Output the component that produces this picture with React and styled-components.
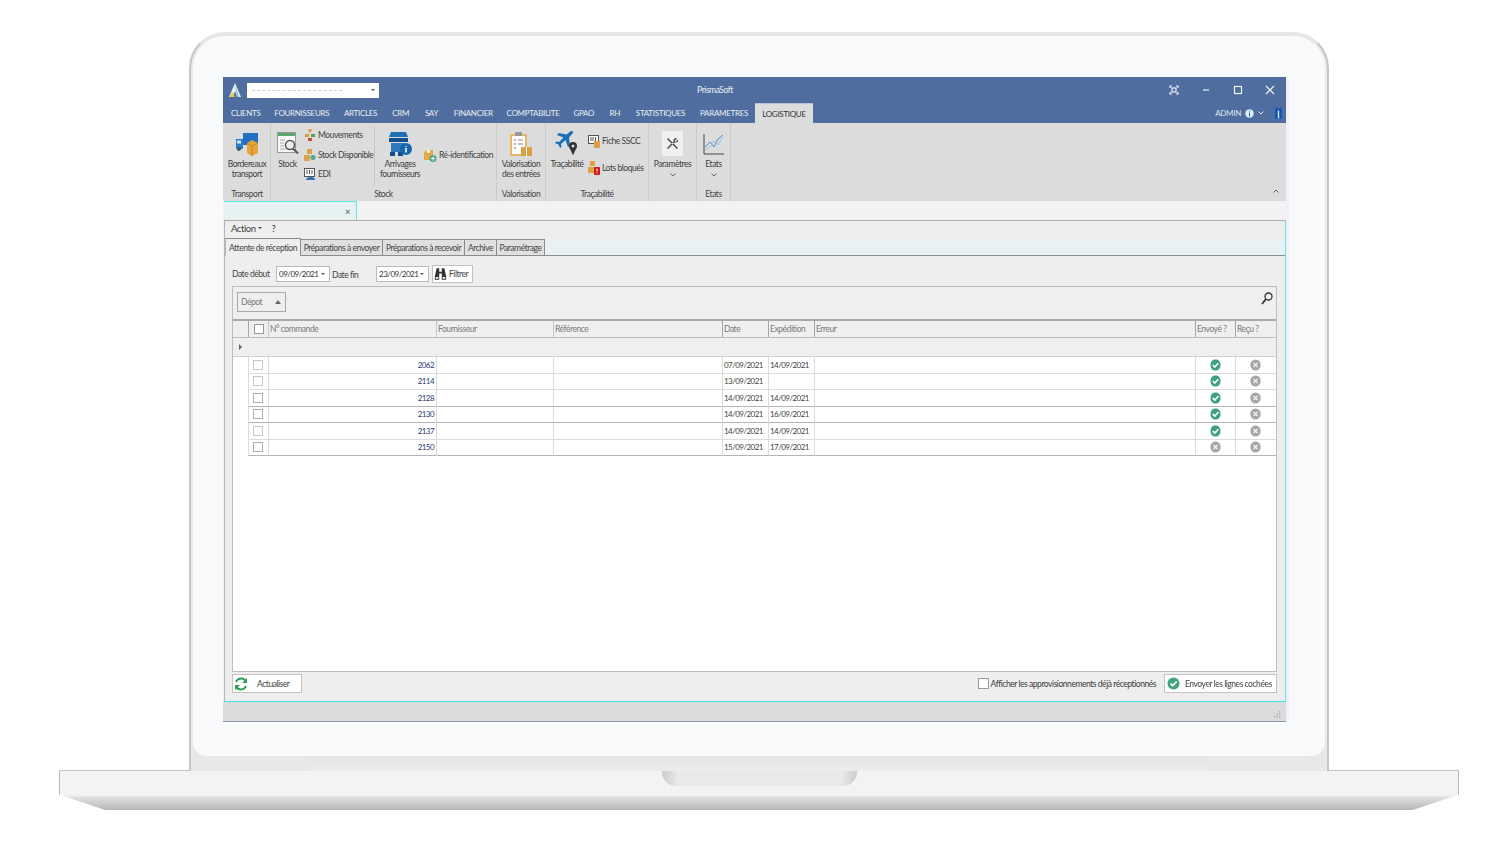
import React from "react";
import styled, { createGlobalStyle } from "styled-components";

const COLS = "15px 20px 168px 117px 169px 46px 46px 381px 40px 41px";

const NAV = [
  ["CLIENTS", 43.5],
  ["FOURNISSEURS", 68.5],
  ["ARTICLES", 49],
  ["CRM", 31.5],
  ["SAY", 30],
  ["FINANCIER", 53.5],
  ["COMPTABILITE", 66],
  ["GPAO", 35.5],
  ["RH", 26.5],
  ["STATISTIQUES", 65],
  ["PARAMETRES", 62],
];

const ROWS = [
  { id: "2062", date: "07/09/2021", exp: "14/09/2021", sent: true },
  { id: "2114", date: "13/09/2021", exp: "", sent: true },
  { id: "2128", date: "14/09/2021", exp: "14/09/2021", sent: true, dark: true },
  { id: "2130", date: "14/09/2021", exp: "16/09/2021", sent: true, dark: true },
  { id: "2137", date: "14/09/2021", exp: "14/09/2021", sent: true },
  { id: "2150", date: "15/09/2021", exp: "17/09/2021", sent: false, dark: true },
];

const HEADERS = ["N° commande", "Fournisseur", "Référence", "Date", "Expédition", "Erreur", "Envoyé ?", "Reçu ?"];

const TABS = ["Attente de réception", "Préparations à envoyer", "Préparations à recevoir", "Archive", "Paramétrage"];
const TAB_W = [76, 83, 83, 33, 49];

const Global = createGlobalStyle`
  html, body { margin: 0; padding: 0; background: #fff; }
  body { font-family: Lato, "Liberation Sans", Arial, sans-serif; }
  * { box-sizing: border-box; }
  svg { flex: none; }
`;

const Page = styled.div`
  width: 1500px;
  height: 842px;
  overflow: hidden;
  padding-top: 32px;
  display: flex;
  flex-direction: column;
  align-items: center;
`;

const Lid = styled.div`
  position: relative;
  z-index: 1;
  width: 1140px;
  height: 739px;
  margin: 0 0 -1px 18px;
  background: #e6e8ea;
  border: 2px solid #e4e6e8;
  border-left-color: #c4c6c8;
  border-right-color: #c4c6c8;
  border-bottom: 0;
  border-radius: 36px 36px 0 0;
  display: flex;
  flex-direction: column;
`;

const Bezel = styled.div`
  height: 720px;
  margin: 2px 2px 0;
  background: #f8fafb;
  border-radius: 32px 32px 14px 14px;
  padding: 41px 0 0 30px;
`;

const Hinge = styled.div`
  height: 15px;
  margin: 0 120px;
  background: linear-gradient(#e3e4e6, #ebedef);
`;

const Base = styled.div`
  position: relative;
  width: 1400px;
  height: 40px;
  margin-left: 18px;
  background: linear-gradient(#f2f3f5 0, #f1f3f5 62%, #dfe0e2 68%, #b4b5b7 100%);
  clip-path: polygon(0 0, 100% 0, 100% 61%, 96.7% 100%, 3.3% 100%, 0 61%);
  border-top: 1px solid #c4c4c4;
  border-left: 1px solid #b8b8b8;
  border-right: 1px solid #b8b8b8;
`;

const Notch = styled.div`
  position: absolute;
  left: 602px;
  top: 0;
  width: 195px;
  height: 15px;
  border-radius: 0 0 14px 14px;
  background: linear-gradient(90deg, #c9cbcc, #e8eaeb 8%, #e8eaeb 92%, #c9cbcc);
`;

const Screen = styled.div`
  width: 1063px;
  height: 645px;
  background: #f0f0f0;
  box-shadow: 3px 0 0 #f3eff8;
  border-bottom: 1px solid #8f97ab;
  display: flex;
  flex-direction: column;
  font-size: 8.5px;
  letter-spacing: -0.45px;
  white-space: nowrap;
  color: #3c3c3c;
  filter: blur(0.35px);
`;

const TitleBar = styled.div`
  height: 26px;
  background: #4f6d9e;
  display: flex;
  align-items: center;
  padding: 0 10px 0 6px;
  color: #eef2f8;
`;

const AppLogo = styled.svg`
  width: 12px;
  height: 14px;
  margin-right: 6px;
`;

const Combo = styled.div`
  width: 132px;
  height: 15px;
  background: #fff;
  display: flex;
  align-items: center;
  justify-content: space-between;
  padding: 0 4px 0 5px;
`;

const Redacted = styled.span`
  width: 90px;
  border-top: 1px dashed #d0d0d0;
`;

const Caret = styled.span`
  width: 0;
  height: 0;
  border-left: 2px solid transparent;
  border-right: 2px solid transparent;
  border-top: 2px solid ${(p) => p.$color || "#555"};
`;

const AppTitle = styled.div`
  width: 60px;
  margin-left: 306px;
  text-align: center;
`;

const WinButtons = styled.div`
  margin-left: auto;
  display: flex;
  align-items: center;
  gap: 20px;
`;

const WinIcon = styled.svg`
  width: 12px;
  height: 12px;
  fill: none;
  stroke: #eef2f8;
  stroke-width: 1.2;
`;

const NavBar = styled.div`
  height: 20px;
  background: #4f6d9e;
  display: flex;
  align-items: flex-end;
  padding-left: 1px;
`;

const NavItem = styled.div`
  width: ${(p) => p.$w}px;
  height: 20px;
  display: flex;
  align-items: center;
  justify-content: center;
  color: #e8edf5;
  font-size: 8px;
  letter-spacing: -0.3px;
  flex: none;
`;

const NavActive = styled(NavItem)`
  background: #dcdcdc;
  border-top: 1px solid #b9c3d4;
  color: #333;
`;

const UserBox = styled.div`
  margin-left: auto;
  height: 20px;
  display: flex;
  align-items: center;
  gap: 3px;
  padding-right: 3px;
  color: #dfe6f0;
  font-size: 8px;
  letter-spacing: -0.3px;
`;

const Ribbon = styled.div`
  position: relative;
  height: 78px;
  background: #dcdcdc;
  display: flex;
  padding-left: 1px;
`;

const Group = styled.div`
  width: ${(p) => p.$w}px;
  flex: none;
  display: flex;
  flex-direction: column;
  border-right: 1px solid #cacaca;
`;

const GroupBody = styled.div`
  height: 65px;
  display: flex;
  padding-top: 8px;
`;

const GroupLabel = styled.div`
  height: 13px;
  text-align: center;
  line-height: 12px;
  color: #444;
`;

const BigButton = styled.div`
  width: ${(p) => p.$w}px;
  flex: none;
  margin-left: ${(p) => p.$ml || 0}px;
  display: flex;
  flex-direction: column;
  align-items: center;
  text-align: center;
  white-space: normal;
  line-height: 9.5px;
  color: #3f3f3f;
`;

const BigIcon = styled.div`
  height: 25px;
  margin-bottom: 4px;
  display: flex;
  align-items: center;
  justify-content: center;
  ${(p) => p.$boxed && "width: 21px; background: #f0f0f0;"}
`;

const SmallColumn = styled.div`
  width: ${(p) => p.$w}px;
  flex: none;
  margin: ${(p) => p.$mt || 0}px 0 0 ${(p) => p.$ml || 0}px;
  height: ${(p) => p.$h || 54}px;
  display: flex;
  flex-direction: column;
  justify-content: ${(p) => p.$justify || "space-between"};
  gap: ${(p) => p.$gap || 0}px;
  padding-top: ${(p) => p.$pt || 0}px;
`;

const SmallButton = styled.div`
  display: flex;
  align-items: center;
  gap: 2px;
  height: 12px;
  color: #3f3f3f;
`;

const InnerSep = styled.div`
  width: 1px;
  height: 58px;
  flex: none;
  margin: -4px 0 0 ${(p) => p.$ml}px;
  background: #c6c6c6;
`;

const Chevron = styled.svg`
  width: 6px;
  height: 4px;
  margin-top: 3px;
  fill: none;
  stroke: #666;
  stroke-width: 1;
`;

const Collapse = styled(Chevron)`
  position: absolute;
  right: 7px;
  bottom: 8px;
  margin: 0;
`;

const DocStrip = styled.div`
  height: 19px;
  background: #f2f2f2;
  padding-left: 1px;
`;

const DocTab = styled.div`
  width: 133px;
  height: 19px;
  background: #e6f1f1;
  border-top: 1px solid #5fe6ea;
  border-right: 1px solid #5fe6ea;
  display: flex;
  align-items: center;
  justify-content: flex-end;
  padding-right: 6px;
  color: #555;
  font-size: 10px;
`;

const Panel = styled.div`
  height: 482px;
  margin-left: 1px;
  background: #eeeeee;
  border-top: 1px solid #aaa;
  border-left: 1px solid #b5b5b5;
  border-right: 1px solid #5fe6ea;
  border-bottom: 1px solid #40e4e4;
  display: flex;
  flex-direction: column;
`;

const ActionBar = styled.div`
  height: 18px;
  display: flex;
  align-items: center;
  gap: 10px;
  padding: 0 0 4px 6px;
  font-size: 9.5px;
  color: #444;
`;

const ActionItem = styled.span`
  display: flex;
  align-items: center;
  gap: 2px;
`;

const TabStrip = styled.div`
  height: 17px;
  background: #e8f2f2;
  border-bottom: 1px solid #8c8c8c;
  display: flex;
  align-items: flex-end;
`;

const Tab = styled.div`
  width: ${(p) => p.$w}px;
  flex: none;
  height: ${(p) => (p.$active ? 18 : 16)}px;
  margin-bottom: ${(p) => (p.$active ? -1 : 0)}px;
  background: ${(p) => (p.$active ? "#eeeeee" : "#e0e0e0")};
  border: 1px solid #8c8c8c;
  border-left-color: ${(p) => (p.$active ? "#b5b5b5" : "#8c8c8c")};
  border-bottom: 0;
  margin-right: -1px;
  display: flex;
  align-items: center;
  justify-content: center;
  color: #444;
`;

const Content = styled.div`
  flex: 1;
  display: flex;
  flex-direction: column;
  padding: 9px 8px 0 7px;
`;

const FilterRow = styled.div`
  height: 18px;
  display: flex;
  align-items: center;
`;

const FilterLabel = styled.span`
  width: ${(p) => p.$w}px;
  padding-top: ${(p) => p.$down || 0}px;
  padding-left: ${(p) => p.$pl || 0}px;
  color: #444;
`;

const DateInput = styled.div`
  width: ${(p) => p.$w}px;
  height: 16px;
  background: #fff;
  border: 1px solid #bbb;
  display: flex;
  align-items: center;
  justify-content: space-between;
  padding: 0 4px 0 2px;
  color: #333;
  font-size: 8px;
  letter-spacing: -0.5px;
`;

const ToolButton = styled.div`
  width: ${(p) => p.$w}px;
  height: ${(p) => p.$h || 18}px;
  margin-left: ${(p) => p.$ml || 0}px;
  background: #fff;
  border: 1px solid #c2c2c2;
  display: flex;
  align-items: center;
  gap: ${(p) => p.$gap || 2}px;
  padding-left: ${(p) => p.$pl || 1}px;
  color: #444;
`;

const GridBox = styled.div`
  height: 386px;
  margin-top: 3px;
  background: #fff;
  border: 1px solid #bdbdbd;
  display: flex;
  flex-direction: column;
`;

const GroupPanel = styled.div`
  height: 34px;
  background: #efefef;
  border-bottom: 2px solid #a8a8a8;
  display: flex;
  align-items: center;
  justify-content: space-between;
  padding: 0 3px 2px 4px;
`;

const SearchSlot = styled.div`
  height: 12px;
  align-self: flex-start;
  margin-top: 5px;
`;

const GroupChip = styled.div`
  width: 49px;
  height: 20px;
  border: 1px solid #a9a9a9;
  display: flex;
  align-items: center;
  justify-content: space-between;
  padding: 0 4px 0 3px;
  color: #777;
`;

const SortArrow = styled.span`
  width: 0;
  height: 0;
  border-left: 3px solid transparent;
  border-right: 3px solid transparent;
  border-bottom: 4px solid #666;
`;

const HeaderRow = styled.div`
  display: grid;
  grid-template-columns: ${COLS};
  height: 17px;
  background: #efefef;
  border-bottom: 1px solid #bdbdbd;
`;

const HeaderCell = styled.div`
  display: flex;
  align-items: center;
  padding-left: 1px;
  color: #7a7a7a;
  border-left: 1px solid ${(p) => (p.$strong ? "#a5a5a5" : "#c8c8c8")};
`;

const FilterStrip = styled.div`
  height: 19px;
  background: #efefef;
  border-bottom: 1px solid #cfcfcf;
  display: flex;
  align-items: center;
  padding-left: 6px;
`;

const RowArrow = styled.span`
  width: 0;
  height: 0;
  border-top: 3px solid transparent;
  border-bottom: 3px solid transparent;
  border-left: 3px solid #666;
`;

const Row = styled.div`
  display: grid;
  grid-template-columns: ${COLS};
  height: 16.5px;
`;

const Cell = styled.div`
  display: flex;
  align-items: center;
  justify-content: ${(p) => p.$align || "flex-start"};
  padding: 0 2px 0 1px;
  color: ${(p) => p.$color || "#444"};
  border-left: 1px solid #dcdcdc;
  border-bottom: 1px solid ${(p) => (p.$dark ? "#b4b4b4" : "#dcdcdc")};
  font-size: 8px;
  letter-spacing: -0.55px;
`;

const Gutter = styled.div``;

const Check = styled.span`
  width: ${(p) => p.$size || 10}px;
  height: ${(p) => p.$size || 10}px;
  flex: none;
  margin-left: ${(p) => p.$ml || 0}px;
  background: #fff;
  border: 1px solid ${(p) => p.$color || "#c4c4c4"};
`;

const Footer = styled.div`
  height: 28px;
  display: flex;
  align-items: flex-start;
  padding-top: 2px;
`;

const FooterOption = styled.div`
  margin-left: auto;
  height: 19px;
  display: flex;
  align-items: center;
  gap: 2px;
`;

const StatusBar = styled.div`
  flex: 1;
  background: #dcdcdc;
  display: flex;
  justify-content: flex-end;
  align-items: flex-end;
  padding: 0 5px 3px 0;
`;

const Grip = styled.svg`
  width: 7px;
  height: 7px;
  fill: #b0b0b0;
`;

const Sent = () => (
  <svg width="11" height="12" viewBox="0 0 11 12">
    <path d="M5.5 .5C8.5.5 10.5 2.5 10.5 6s-2 5.5-5 5.5S.5 9.500.5 6 2.500.500 5.500.5Z" fill="#3fa27a" />
    <path d="M2.800 6l2 2 3.500-3.800" fill="none" stroke="#fff" strokeWidth="1.600" />
  </svg>
);

const Cross = () => (
  <svg width="11" height="12" viewBox="0 0 11 12">
    <ellipse cx="5.500" cy="6" rx="5.200" ry="5.500" fill="#a6a6a6" />
    <path d="M3.500 4l4 4M7.500 4l-4 4" fill="none" stroke="#eee" strokeWidth="1.500" />
  </svg>
);

const TruckIcon = () => (
  <svg width="24" height="24" viewBox="0 0 24 24">
    <rect x="8" y="1" width="15" height="12" fill="#1f6fc4" />
    <path d="M1 7h7v10H1Z" fill="#2a7ccc" />
    <path d="M2 8.500h4v3H2Z" fill="#cfe4f7" />
    <circle cx="4" cy="17" r="2" fill="#456" />
    <path d="M12 11l5-3 6 3v10l-6 3-5-3Z" fill="#e6a53c" />
    <path d="M17 14v10M12 11l5 3 6-3" fill="none" stroke="#bd7f1d" strokeWidth=".8" />
  </svg>
);

const StockIcon = () => (
  <svg width="22" height="25" viewBox="0 0 22 25">
    <rect x=".5" y="1.500" width="18" height="20" fill="#f7f7f7" stroke="#999" />
    <rect x="1" y="2" width="17" height="3" fill="#5aa86c" />
    <circle cx="13" cy="14" r="4.500" fill="#e8eef2" stroke="#555" strokeWidth="1.500" />
    <path d="M16 17.500l5 5" stroke="#555" strokeWidth="2" />
    <path d="M3 9h5M3 12h4M3 15h4M3 18h6" stroke="#aaa" />
  </svg>
);

const BoxesIcon = () => (
  <svg width="12" height="12" viewBox="0 0 12 12">
    <path d="M1 5h4v3H1Z" fill="#d99a3a" />
    <path d="M7 5h4v3H7Z" fill="#57a05b" />
    <path d="M4 9h4v3H4Z" fill="#c94f3c" />
    <path d="M6 0v4M4 2l2-2 2 2" fill="none" stroke="#d99a3a" strokeWidth="1.200" />
  </svg>
);

const StockSmallIcon = () => (
  <svg width="12" height="12" viewBox="0 0 12 12">
    <path d="M3 0h5v5H3Z" fill="#d9a54a" />
    <path d="M0 6h6v6H0Z" fill="#d9a54a" />
    <circle cx="9" cy="8.500" r="2.500" fill="#57a58a" />
  </svg>
);

const EdiIcon = () => (
  <svg width="12" height="12" viewBox="0 0 12 12">
    <rect x=".5" y=".5" width="10" height="8" fill="#fff" stroke="#555" />
    <path d="M3 2v4M5.500 2v4M8 2v4" stroke="#555" />
    <path d="M2 12c0-2 2-3 4-3s5 0 5 3Z" fill="#2f72b8" />
  </svg>
);

const ArrivalIcon = () => (
  <svg width="25" height="26" viewBox="0 0 25 26">
    <path d="M3 1h15l2 5H1Z" fill="#1f6fb5" />
    <rect x="1" y="7" width="19" height="4" fill="#124f8d" />
    <rect x="3" y="12" width="14" height="9" fill="#2f78bd" />
    <rect x="2" y="21" width="5" height="4" fill="#124f8d" />
    <rect x="10" y="21" width="5" height="4" fill="#124f8d" />
    <circle cx="18" cy="18" r="6" fill="#1466ad" />
    <path d="M18 15v.800M18 17v4.500" stroke="#fff" strokeWidth="1.600" />
  </svg>
);

const ReidIcon = () => (
  <svg width="13" height="13" viewBox="0 0 13 13">
    <path d="M0 3l3-2h6v10H0Z" fill="#e3a748" />
    <path d="M3 1v3h3V1" fill="#fff3d8" />
    <circle cx="9" cy="9.500" r="3.500" fill="#4da88a" />
    <path d="M9 7.500v4M7 9.500h4" stroke="#fff" />
  </svg>
);

const ValoIcon = () => (
  <svg width="24" height="26" viewBox="0 0 24 26">
    <rect x="1" y="3" width="17" height="22" rx="1.500" fill="#e8b765" />
    <rect x="3" y="5" width="13" height="18" fill="#fff" />
    <rect x="6" y="1" width="7" height="4" fill="#999" />
    <path d="M5 9h2M5 13h2M5 17h2" stroke="#c9483c" strokeWidth="1.200" />
    <path d="M9 9h5M9 13h5" stroke="#888" />
    <path d="M12 16h11v9H12Z" fill="#d9a048" />
    <path d="M17.500 16v9" stroke="#fff" />
  </svg>
);

const PlaneIcon = () => (
  <svg width="24" height="25" viewBox="0 0 24 25">
    <path d="M16 0c2-.5 2.500 1 1.500 2.500L14 6.500l1 8-2 1.500-2.500-7L6 13l.5 3-1.500 1-1.500-3.500L0 12l1-1.500 3 .5 4.500-4.500L2 4l1.500-2 8 1.500Z" fill="#1b6fb8" />
    <circle cx="18" cy="15" r="4" fill="#333" />
    <circle cx="18" cy="15" r="1.500" fill="#ddd" />
    <path d="M15 17.500l3 7 3-7Z" fill="#333" />
  </svg>
);

const SsccIcon = () => (
  <svg width="12" height="13" viewBox="0 0 12 13">
    <rect x=".5" y=".5" width="10" height="8" fill="#fff" stroke="#555" />
    <path d="M3 2v4M5 2v4M7.500 2v4" stroke="#555" />
    <rect x="6" y="6" width="6" height="7" fill="#d9a048" />
  </svg>
);

const LotsIcon = () => (
  <svg width="12" height="14" viewBox="0 0 12 14">
    <path d="M2 0h5v5H2ZM0 6h6v6H0Z" fill="#dca33f" />
    <rect x="6" y="6" width="6" height="8" rx="1" fill="#d11a1a" />
    <path d="M9 7.500v3M9 11.500v1" stroke="#fff" />
  </svg>
);

const ToolsIcon = () => (
  <svg width="13" height="13" viewBox="0 0 13 13">
    <path d="M2 1l10 10-1 1L1 2ZM12 2.500 9.500 5l-1-1L11 1.500C9 .500 7 2 7.500 4.500L1 11l1 1 6.500-6.500C11 6 12.500 4.500 12 2.500Z" fill="#444" />
  </svg>
);

const ChartIcon = () => (
  <svg width="21" height="22" viewBox="0 0 21 22">
    <path d="M1 1v20h20" fill="none" stroke="#444" />
    <path d="M2 14l5-5 4 5 4-8 5-4" fill="none" stroke="#4a8fd0" />
    <path d="M2 17l5-3 4-6 4 4 5-8" fill="none" stroke="#9ec2e6" />
  </svg>
);

const Binoculars = () => (
  <svg width="13" height="14" viewBox="0 0 15 15">
    <path d="M3 1h3v4h3V1h3l2 9v4H9V7H6v7H1v-4Z" fill="#333" />
    <rect x="2" y="11" width="3" height="2" fill="#fff" />
    <rect x="10" y="11" width="3" height="2" fill="#fff" />
  </svg>
);

const Refresh = () => (
  <svg width="14" height="14" viewBox="0 0 14 14">
    <path d="M12 4.500A5.500 5.500 0 0 0 2 5M2 9.500A5.500 5.500 0 0 0 12 9" fill="none" stroke="#2e9b57" strokeWidth="2" />
    <path d="M13 1v5H8ZM1 13V8h5Z" fill="#2e9b57" />
  </svg>
);

const SendCheck = () => (
  <svg width="13" height="13" viewBox="0 0 13 13">
    <circle cx="6.500" cy="6.500" r="6" fill="#3fa27a" />
    <path d="M3.500 6.500l2.200 2.200 4-4.200" fill="none" stroke="#fff" strokeWidth="1.800" />
  </svg>
);

const Magnifier = () => (
  <svg width="12" height="13" viewBox="0 0 12 13">
    <circle cx="7.500" cy="4.500" r="3.500" fill="none" stroke="#333" strokeWidth="1.300" />
    <path d="M5 7L1 12" stroke="#333" strokeWidth="1.800" />
  </svg>
);

const ChevronDown = () => (
  <Chevron viewBox="0 0 6 4">
    <path d="M.5.500 3 3 5.500.5" />
  </Chevron>
);

function App() {
  return (
    <Page>
      <Global />
      <Lid>
        <Bezel>
          <Screen>
            <TitleBar>
              <AppLogo viewBox="0 0 12 14">
                <path d="M6 0l6 14H8L6 8l-2 6H0Z" fill="#e8edf5" />
                <path d="M3 9l3 5H1Z" fill="#e8c53a" />
                <path d="M6 2l3 9 1 3H8Z" fill="#6fc3d8" />
              </AppLogo>
              <Combo>
                <Redacted />
                <Caret />
              </Combo>
              <AppTitle>PrismaSoft</AppTitle>
              <WinButtons>
                <WinIcon viewBox="0 0 12 12">
                  <path d="M2 4V2h2M8 2h2v2M10 8v2H8M4 10H2V8" />
                  <rect x="4" y="4" width="4" height="4" />
                </WinIcon>
                <WinIcon viewBox="0 0 12 12">
                  <path d="M3 6h6" />
                </WinIcon>
                <WinIcon viewBox="0 0 12 12">
                  <rect x="2.500" y="2.500" width="7" height="7" />
                </WinIcon>
                <WinIcon viewBox="0 0 12 12">
                  <path d="M2 2l8 8M10 2l-8 8" />
                </WinIcon>
              </WinButtons>
            </TitleBar>
            <NavBar>
              {NAV.map(([label, w]) => (
                <NavItem key={label} $w={w}>{label}</NavItem>
              ))}
              <NavActive $w={58}>LOGISTIQUE</NavActive>
              <UserBox>
                ADMIN
                <svg width="11" height="11" viewBox="0 0 11 11">
                  <circle cx="5.500" cy="5.500" r="4.800" fill="#e4ecf7" stroke="#2d62b0" />
                  <path d="M5.500 2.500v1M5.500 4.500v4" stroke="#2d62b0" />
                </svg>
                <svg width="6" height="4" viewBox="0 0 6 4">
                  <path d="M.5.500 3 3 5.500.5" fill="none" stroke="#e8edf5" />
                </svg>
                <svg width="9" height="12" viewBox="0 0 9 12" style={{ marginLeft: 7 }}>
                  <path d="M1 3 2 0l2.500 2L7 0l1 3v9H1Z" fill="#1257b0" />
                  <path d="M4.500 3.500v8" stroke="#dfe8f4" strokeWidth="1.400" />
                </svg>
              </UserBox>
            </NavBar>
            <Ribbon>
              <Group $w={47}>
                <GroupBody>
                  <BigButton $w={46}>
                    <BigIcon><TruckIcon /></BigIcon>
                    Bordereaux transport
                  </BigButton>
                </GroupBody>
                <GroupLabel>Transport</GroupLabel>
              </Group>
              <Group $w={226}>
                <GroupBody>
                  <BigButton $w={33}>
                    <BigIcon><StockIcon /></BigIcon>
                    Stock
                  </BigButton>
                  <SmallColumn $w={67} $mt={-2} $h={51}>
                    <SmallButton><BoxesIcon />Mouvements</SmallButton>
                    <SmallButton><StockSmallIcon />Stock Disponible</SmallButton>
                    <SmallButton><EdiIcon />EDI</SmallButton>
                  </SmallColumn>
                  <InnerSep $ml={3} />
                  <BigButton $w={40} $ml={5}>
                    <BigIcon><ArrivalIcon /></BigIcon>
                    Arrivages fournisseurs
                  </BigButton>
                  <SmallColumn $w={70} $ml={4} $pt={18} $justify="flex-start">
                    <SmallButton><ReidIcon />Ré-identification</SmallButton>
                  </SmallColumn>
                </GroupBody>
                <GroupLabel>Stock</GroupLabel>
              </Group>
              <Group $w={49}>
                <GroupBody>
                  <BigButton $w={48}>
                    <BigIcon><ValoIcon /></BigIcon>
                    Valorisation des entrées
                  </BigButton>
                </GroupBody>
                <GroupLabel>Valorisation</GroupLabel>
              </Group>
              <Group $w={103}>
                <GroupBody>
                  <BigButton $w={42}>
                    <BigIcon><PlaneIcon /></BigIcon>
                    Traçabilité
                  </BigButton>
                  <SmallColumn $w={58} $pt={4} $justify="flex-start" $gap={15}>
                    <SmallButton><SsccIcon />Fiche SSCC</SmallButton>
                    <SmallButton><LotsIcon />Lots bloqués</SmallButton>
                  </SmallColumn>
                </GroupBody>
                <GroupLabel>Traçabilité</GroupLabel>
              </Group>
              <Group $w={48}>
                <GroupBody>
                  <BigButton $w={47}>
                    <BigIcon $boxed><ToolsIcon /></BigIcon>
                    Paramètres
                    <ChevronDown />
                  </BigButton>
                </GroupBody>
                <GroupLabel />
              </Group>
              <Group $w={34}>
                <GroupBody>
                  <BigButton $w={33}>
                    <BigIcon><ChartIcon /></BigIcon>
                    Etats
                    <ChevronDown />
                  </BigButton>
                </GroupBody>
                <GroupLabel>Etats</GroupLabel>
              </Group>
              <Collapse viewBox="0 0 6 4">
                <path d="M.5 3.500 3 1l2.500 2.500" />
              </Collapse>
            </Ribbon>
            <DocStrip>
              <DocTab>×</DocTab>
            </DocStrip>
            <Panel>
              <ActionBar>
                <ActionItem>Action <Caret $color="#444" /></ActionItem>
                <span>?</span>
              </ActionBar>
              <TabStrip>
                {TABS.map((t, i) => (
                  <Tab key={t} $w={TAB_W[i]} $active={i === 0}>{t}</Tab>
                ))}
              </TabStrip>
              <Content>
                <FilterRow>
                  <FilterLabel $w={44}>Date début</FilterLabel>
                  <DateInput $w={54}>09/09/2021<Caret /></DateInput>
                  <FilterLabel $w={46} $down={2} $pl={2}>Date fin</FilterLabel>
                  <DateInput $w={53}>23/09/2021<Caret /></DateInput>
                  <ToolButton $w={41} $ml={3}><Binoculars />Filtrer</ToolButton>
                </FilterRow>
                <GridBox>
                  <GroupPanel>
                    <GroupChip>Dépot<SortArrow /></GroupChip>
                    <SearchSlot><Magnifier /></SearchSlot>
                  </GroupPanel>
                  <HeaderRow>
                    <Gutter />
                    <HeaderCell $strong><Check $size={10} $color="#999" $ml={4} /></HeaderCell>
                    {HEADERS.map((h, i) => (
                      <HeaderCell key={h} $strong={i > 2}>{h}</HeaderCell>
                    ))}
                  </HeaderRow>
                  <FilterStrip><RowArrow /></FilterStrip>
                  {ROWS.map((r) => (
                    <Row key={r.id}>
                      <Gutter />
                      <Cell $dark={r.dark} $align="center"><Check $color={r.dark ? "#b0b0b0" : "#c8c8c8"} /></Cell>
                      <Cell $dark={r.dark} $align="flex-end" $color="#1f3a78">{r.id}</Cell>
                      <Cell $dark={r.dark} />
                      <Cell $dark={r.dark} />
                      <Cell $dark={r.dark}>{r.date}</Cell>
                      <Cell $dark={r.dark}>{r.exp}</Cell>
                      <Cell $dark={r.dark} />
                      <Cell $dark={r.dark} $align="center">{r.sent ? <Sent /> : <Cross />}</Cell>
                      <Cell $dark={r.dark} $align="center"><Cross /></Cell>
                    </Row>
                  ))}
                </GridBox>
                <Footer>
                  <ToolButton $w={70} $h={19} $gap={9}><Refresh />Actualiser</ToolButton>
                  <FooterOption>
                    <Check $size={11} $color="#999" />
                    Afficher les approvisionnements déjà réceptionnés
                  </FooterOption>
                  <ToolButton $w={113} $h={19} $ml={8} $gap={5} $pl={2}><SendCheck />Envoyer les lignes cochées</ToolButton>
                </Footer>
              </Content>
            </Panel>
            <StatusBar>
              <Grip viewBox="0 0 7 7">
                <path d="M5 0h1.500v1.500H5ZM2.500 2.500H4V4H2.500ZM5 2.500h1.500V4H5ZM0 5h1.500v1.500H0ZM2.500 5H4v1.500H2.500ZM5 5h1.500v1.500H5Z" />
              </Grip>
            </StatusBar>
          </Screen>
        </Bezel>
        <Hinge />
      </Lid>
      <Base>
        <Notch />
      </Base>
    </Page>
  );
}

export default App;
